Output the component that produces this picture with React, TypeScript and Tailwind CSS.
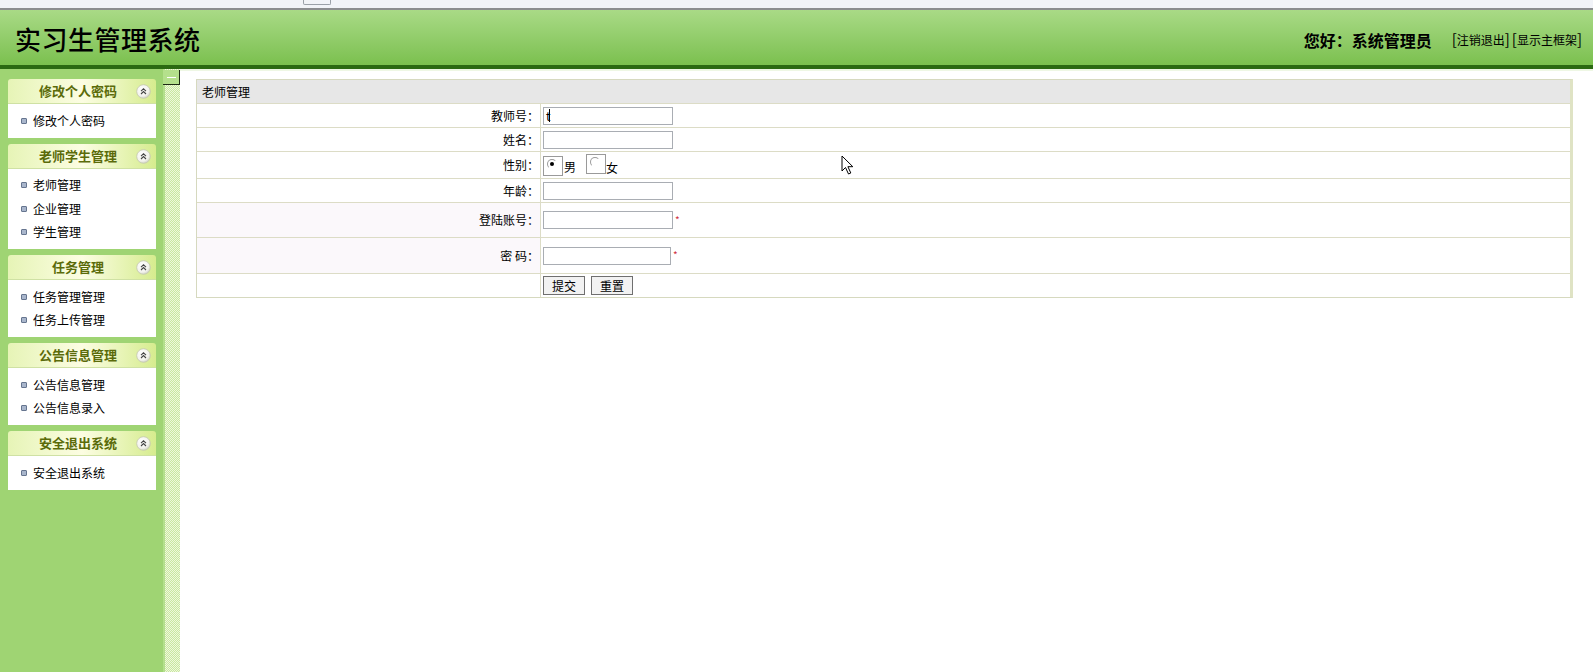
const menus = [
  { title: "修改个人密码", items: ["修改个人密码"] },
  { title: "老师学生管理", items: ["老师管理", "企业管理", "学生管理"] },
  { title: "任务管理", items: ["任务管理管理", "任务上传管理"] },
  { title: "公告信息管理", items: ["公告信息管理", "公告信息录入"] },
  { title: "安全退出系统", items: ["安全退出系统"] },
];

const font = "font-['Noto_Sans_CJK_SC','Noto_Sans',sans-serif]";

function CollapseIcon() {
  return (
    <svg width="15" height="15" viewBox="0 0 15 15" className="absolute right-[5px] top-[5px]">
      <defs>
        <radialGradient id="cg" cx="40%" cy="35%" r="70%">
          <stop offset="0%" stopColor="#ffffff" />
          <stop offset="70%" stopColor="#f2f2ec" />
          <stop offset="100%" stopColor="#c9ccbc" />
        </radialGradient>
      </defs>
      <circle cx="7.5" cy="7.5" r="6.8" fill="url(#cg)" stroke="#c4c8b0" strokeWidth="0.8" />
      <path d="M5 7.2 L7.5 4.8 L10 7.2 M5 10 L7.5 7.6 L10 10" fill="none" stroke="#444" strokeWidth="1.1" />
    </svg>
  );
}

function MenuPanel({ title, items }: { title: string; items: string[] }) {
  return (
    <div className="mx-[8px] w-[148px]">
      <div className="relative h-[25px] flex items-center justify-center bg-gradient-to-r from-[#e6f4b6] via-[#fcfde2] to-[#d6ec8e] border-b border-[#cfe1a4] rounded-t-[3px]">
        <span className="text-[13px] font-bold text-[#5b6b0a] -ml-[8px]">{title}</span>
        <CollapseIcon />
      </div>
      <div className="bg-white py-[5px]">
        {items.map((it) => (
          <div key={it} className="h-[23.5px] flex items-center pl-[13px] gap-[6px]">
            <span className="w-[6px] h-[6px] bg-[#a9b6cc] border border-[#66758f] rounded-[1px]" />
            <span className="text-[12px] text-black">{it}</span>
          </div>
        ))}
      </div>
    </div>
  );
}

function TextInput({ w = 130, value = "" }: { w?: number; value?: string }) {
  return (
    <div
      className="h-[18px] border border-[#a9adb3] bg-white flex items-center pl-[2px] text-[12px] text-black"
      style={{ width: w }}
    >
      {value && (
        <>
          <span className="leading-none">t</span>
          <span className="w-px h-[13px] bg-black -ml-[2px]" />
        </>
      )}
    </div>
  );
}

function Radio({ checked }: { checked?: boolean }) {
  return (
    <span className="w-[20px] h-[20px] border border-[#9a9a9a] bg-white relative inline-block">
      <span className="absolute left-[3px] top-[2px] w-[10px] h-[10px] rounded-full border border-[#9b9b9b] border-r-transparent border-b-white bg-white flex items-center justify-center">
        {checked && <span className="w-[4px] h-[4px] rounded-full bg-black" />}
      </span>
    </span>
  );
}

function Row({ label, h, tint, children }: { label: string; h: number; tint?: boolean; children: React.ReactNode }) {
  return (
    <div className="flex border-t border-[#dcdcc6]" style={{ height: h }}>
      <div
        className={`w-[344px] shrink-0 border-r border-[#dcdcc6] flex items-center justify-end pr-[1px] text-[12px] text-black ${tint ? "bg-[#fbf8fb]" : "bg-white"}`}
      >
        {label}
      </div>
      <div className="flex-1 flex items-center pl-[2px] bg-white">{children}</div>
    </div>
  );
}

export default function App() {
  return (
    <div className={`w-[1593px] h-[672px] flex flex-col bg-white overflow-hidden relative ${font}`}>
      {/* browser strip */}
      <div className="h-[10px] shrink-0 bg-[#f1f3f8] border-b-[2px] border-[#8b8d90] relative">
        <div className="absolute left-[303px] top-0 w-[28px] h-[5px] border border-t-0 border-[#9aa0a8] rounded-b-[2px]" />
      </div>

      {/* header */}
      <div className="h-[59px] shrink-0 bg-gradient-to-b from-[#a9da86] to-[#7bc04e] flex items-center justify-between pl-[15px] pr-[11px] border-b-[4px] border-[#2b6a12]">
        <h1 className="text-[26px] font-medium text-black tracking-[0.5px] mt-[2px]">实习生管理系统</h1>
        <div className="flex items-center mt-[4px]">
          <span className="text-[16px] font-bold text-black">您好：系统管理员</span>
          <span className="ml-[20px] text-[12px] text-black flex items-center">
            <span className="text-[15px]">[</span>注销退出<span className="text-[15px]">]</span>
            <span className="ml-[2px] text-[15px]">[</span>显示主框架<span className="text-[15px]">]</span>
          </span>
        </div>
      </div>

      <div className="flex flex-1 min-h-0">
        {/* sidebar */}
        <div className="w-[163px] shrink-0 bg-[#9fd473] pt-[10px] flex flex-col gap-[6px]">
          {menus.map((m) => (
            <MenuPanel key={m.title} title={m.title} items={m.items} />
          ))}
        </div>

        {/* splitter */}
        <div className="w-[17px] shrink-0 bg-[repeating-conic-gradient(#c9e7a0_0_25%,#eef8dc_0_50%)] bg-[length:2px_2px] border-l-[2px] border-[#b3df8c] relative">
          <div className="absolute -left-[2px] top-[1px] w-[17px] h-[15px] bg-[#b5e08c] border-r border-b border-[#1e2a14] flex items-center justify-center">
            <span className="w-[9px] h-px bg-white" />
          </div>
        </div>

        {/* content */}
        <div className="flex-1 bg-white border-t-[2px] border-[#eef7e4] pt-[8px] pl-[16px] pr-[20px]">
          <div className="border border-[#d6d9bf] border-r-[3px] border-r-[#dfe3c4]">
            <div className="h-[23px] bg-[#e7e7e7] flex items-center pl-[5px] text-[12px] text-black">老师管理</div>
            <Row label="教师号：" h={24}>
              <TextInput value="t" />
            </Row>
            <Row label="姓名：" h={24}>
              <TextInput />
            </Row>
            <Row label="性别：" h={27}>
              <div className="flex items-center text-[12px] text-black mt-[1px]">
                <Radio checked />
                <span className="ml-px mt-[2px]">男</span>
                <span className="ml-[10px]"><Radio /></span>
                <span className="mt-[4px]">女</span>
              </div>
            </Row>
            <Row label="年龄：" h={24}>
              <TextInput />
            </Row>
            <Row label="登陆账号：" h={35} tint>
              <TextInput />
              <span className="text-[#d0313f] text-[10px] ml-[2px] -mt-[2px]">*</span>
            </Row>
            <Row label="密 码：" h={36} tint>
              <TextInput w={128} />
              <span className="text-[#d0313f] text-[10px] ml-[2px] -mt-[2px]">*</span>
            </Row>
            <Row label="" h={24}>
              <button className="w-[42px] h-[19px] bg-[#f2f2f2] border border-[#6f6f6f] text-[12px] leading-none text-black">提交</button>
              <button className="ml-[6px] w-[42px] h-[19px] bg-[#f2f2f2] border border-[#6f6f6f] text-[12px] leading-none text-black">重置</button>
            </Row>
          </div>
        </div>
      </div>

      {/* mouse pointer */}
      <svg width="14" height="21" viewBox="0 0 14 21" className="absolute left-[841px] top-[155px]">
        <path d="M1 1 L1 16 L4.5 12.5 L7.5 19 L9.8 18 L6.9 11.7 L11.8 11.7 Z" fill="white" stroke="black" strokeWidth="1" strokeLinejoin="miter" />
      </svg>
    </div>
  );
}
